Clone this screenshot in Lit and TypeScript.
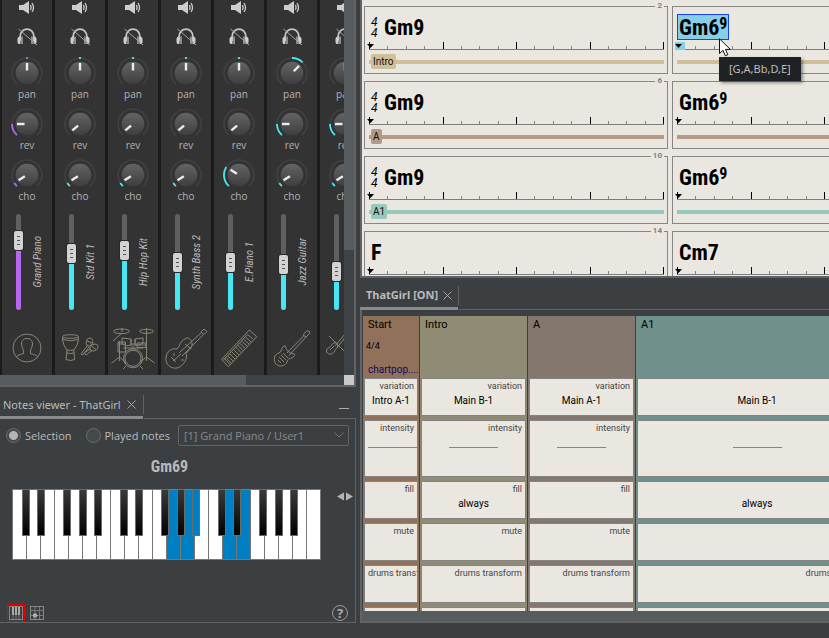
import { LitElement, html, css, svg, nothing, type TemplateResult } from "lit";
import { customElement, property } from "lit/decorators.js";
import { classMap } from "lit/directives/class-map.js";
import { styleMap } from "lit/directives/style-map.js";

const CYAN = "#48e6f4";
const VIOLET = "#b767ee";

interface Channel {
  name: string;
  color: string;
  pan: number;
  rev: number;
  cho: number;
  volume: number;
  icon: TemplateResult;
}

const person = svg`<circle cx="25" cy="22" r="14"/>
  <path d="M14.5 31C15.5 28.5 19 28.5 21.5 27.500C22.500 24 19.500 22 19.500 18C19.500 14 22 12.500 25 12.500S30.500 14 30.500 18C30.500 22 27.500 24 28.500 27.500C31 28.500 34.500 28.500 35.500 31"/>`;
const percussion = svg`<ellipse cx="15.500" cy="10.500" rx="8" ry="1.800"/>
  <path d="M7.500 11C7.500 17 9 20 12 24L11 33.500Q15.500 35.500 19.700 33.500L18.700 24C22 20 23.500 17 23.500 11M8 13.500Q15.500 16 23 13.500M12 24Q15.500 25 18.700 24M11.500 27Q15.500 28 19.300 27"/>
  <ellipse cx="34.500" cy="16" rx="3.200" ry="4" transform="rotate(25 34.500 16)"/>
  <ellipse cx="39" cy="21.500" rx="4.200" ry="3.200" transform="rotate(-25 39 21.500)"/>
  <path d="M32.500 19.500L26 28L28 29L34.500 20.500M35.500 23L29 27L31 29L37 24.500M32 15L37 17M36.500 20L41 23.500"/>`;
const drums = svg`<ellipse cx="13.500" cy="5.300" rx="8" ry="2.300"/><ellipse cx="38.500" cy="5.300" rx="7" ry="2"/>
  <circle cx="25" cy="32.300" r="9.500"/><circle cx="25" cy="32.300" r="8"/>
  <path d="M14 2V6M14 7L5 15M11.500 15V35M38.500 2V35M11.500 31L3.500 37M11.500 31L18 37M38.500 31L31 37M38.500 31L46.500 37M18 40L15 43M32 40L35 43M25 17V23M23 13V20M27 13V20"/>
  <path d="M10 16H17.500V26H10ZM10 18H17.500M29 17H38V21.500H29ZM29 19H38M14 12L23 13V19Q18 21 14 18ZM27 13L35 12V17Q31 20 27 19ZM15 22H35"/>`;
const bass = svg`<path d="M40 6L43 3L46 5.500L43 8.500ZM40.500 6.500L18 27M42.500 8.500L21 30"/>
  <path d="M24 13C27 10 31 14 31 18C31 22 28 25 25 27C27 32 23 40 16 42C9 43 4 38 5 31C6 25 11 22 16 23C19 20 19 15 24 13Z"/>
  <path d="M12 35L20 28M10 31L15 36M13 27V30M20 34H23M24 18L29 22"/>`;
const keyboard = svg`<path d="M35.300 4L42.700 10.700L14.300 40.700L7.700 33.300ZM33.500 8.500L39 13M9.500 31.500L16 38.500"/>
  <path d="M31.500 11L37 16M29.500 13L35 18M27.500 15L33 20M25.500 17L31 22.500M23.500 19L29 24.500M21.500 21L27 26.500M19.500 23.500L25 29M17.500 25.500L23 31M15.500 27.500L21 33M13.500 29.500L19 35M11.500 31L17 37"/>
  <path d="M33.500 8.500L9.500 34"/>`;
const guitar = svg`<path d="M36 9L39.500 5Q42.500 4 43 7L39 11ZM37 9.500L20 27M39 11L22 29.500"/>
  <path d="M17 20C20 19 18 24 21 25L24 27.500C27 28 28 27 27.500 29.500C26.500 33 21 32 20.500 34C20 39 14 42 9.500 38.500C5.500 35 7 28 12 27C15 26.500 14 21 17 20Z"/>
  <path d="M14 29L19 34M12 31L17 36M16 27L21 32M11 34L14 37"/>`;
const strings = svg`<path d="M25 8L15 20M27 9L17 22M9 10L27 28"/>
  <path d="M14 17C17 16 19 19 17 22C15 23 15 27 11 28C7 29 5 24 8 22C12 21 11 18 14 17ZM10 24L14 20"/>`;

const CHANNELS: Channel[] = [
  { name: "Grand Piano", color: VIOLET, pan: 0, rev: -90, cho: -122, volume: 60, icon: person },
  { name: "Std Kit 1", color: CYAN, pan: 0, rev: -130, cho: -122, volume: 47, icon: percussion },
  { name: "Hip Hop Kit", color: CYAN, pan: 0, rev: -130, cho: -122, volume: 50, icon: drums },
  { name: "Synth Bass 2", color: CYAN, pan: 0, rev: -130, cho: -122, volume: 38, icon: bass },
  { name: "E.Piano 1", color: CYAN, pan: 0, rev: -130, cho: -58, volume: 38, icon: keyboard },
  { name: "Jazz Guitar", color: CYAN, pan: 45, rev: -90, cho: -122, volume: 36, icon: guitar },
  { name: "Strings", color: CYAN, pan: 0, rev: -90, cho: -122, volume: 29, icon: strings },
];

const reset = css`
  *, *::before, *::after { box-sizing: border-box; }
  svg { display: block; }
  button { appearance: none; border: 0; padding: 0; margin: 0; background: none; color: inherit; font: inherit; }
`;

function polar(angle: number, r: number): string {
  const a = (angle * Math.PI) / 180;
  return `${(16 + r * Math.sin(a)).toFixed(2)} ${(16 - r * Math.cos(a)).toFixed(2)}`;
}

function arc(from: number, to: number, r: number): string {
  return `M${polar(from, r)}A${r} ${r} 0 ${to - from > 180 ? 1 : 0} 1 ${polar(to, r)}`;
}

@customElement("rotary-knob")
export class RotaryKnob extends LitElement {
  @property() label = "";
  @property() color = CYAN;
  @property({ type: Number }) angle = 0;

  static styles = [reset, css`
    :host { display: block; width: 32px; }
    .knob { display: block; position: relative; text-align: center; }
    .dial { width: 32px; height: 30px; }
    .input { position: absolute; inset: 0; width: 100%; height: 30px; margin: 0; opacity: 0; }
    .text { display: block; font: 10px/15px "Open Sans", sans-serif; color: #b4b4b4; }
  `];

  render() {
    const from = this.label === "pan" ? Math.min(0, this.angle) : -138;
    const lit = this.label === "pan" && this.angle === 0
      ? arc(-4, 4, 15)
      : this.angle > -130 ? arc(from, this.angle, 15) : "";
    return html`<label class="knob">
      <svg class="dial" viewBox="0 0 32 30" fill="none">
        <defs><linearGradient id="g" x1="0" y1="0" x2="0" y2="1">
          <stop offset="0" stop-color="#646464"/><stop offset="1" stop-color="#3e3e3e"/>
        </linearGradient></defs>
        <path d=${arc(-138, 138, 15)} stroke="#414141" stroke-width="1.6"/>
        ${lit ? svg`<path d=${lit} stroke=${this.color} stroke-width="1.8"/>` : nothing}
        <circle cx="16" cy="16" r="11.300" fill="url(#g)"/>
        <path d=${`M${polar(this.angle, 2.5)}L${polar(this.angle, 10)}`} stroke="#ececec" stroke-width="2.4"/>
      </svg>
      <input class="input" type="range" min="-138" max="138" .value=${String(this.angle)}>
      <span class="text">${this.label}</span>
    </label>`;
  }
}

@customElement("mixer-panel")
export class MixerPanel extends LitElement {
  static styles = [reset, css`
    :host { display: grid; grid-template: auto 10px / minmax(0, 1fr) 10px; border: solid #636363; border-width: 0 2px 2px 0; }
    .strips { display: flex; gap: 3px; padding-left: 2px; background: #1b1b1b; overflow: hidden; }
    .strip { flex: 0 0 50px; height: 375px; background: #333; display: flex; flex-direction: column; align-items: center; }
    .speaker { height: 15px; margin-bottom: 12px; }
    .phones { height: 20px; margin-bottom: 10px; }
    .knobs { display: flex; flex-direction: column; gap: 6px; }
    .level { display: grid; grid-template-columns: 9px 14px; column-gap: 8px; align-items: center; height: 96px; margin: 10px 0 16px; padding-left: 5px; }
    .fader { appearance: none; writing-mode: vertical-lr; direction: rtl; width: 9px; height: 96px; margin: 0; background: none; display: block; }
    .fader::-webkit-slider-runnable-track { width: 5px; height: 96px; border-radius: 3px; background: linear-gradient(to top, var(--tone) var(--fill), #2c2c2c var(--fill), #2c2c2c calc(var(--fill) + 1px), #606060 calc(var(--fill) + 1px)); }
    .fader::-webkit-slider-thumb { appearance: none; width: 9px; height: 19px; margin-left: -2px; border-radius: 2px; background:
      linear-gradient(#555, #555) 3px 5px / 3px 1px no-repeat,
      linear-gradient(#555, #555) 3px 9px / 3px 1px no-repeat,
      linear-gradient(#555, #555) 3px 13px / 3px 1px no-repeat, #d3d3d3; box-shadow: 0 0 0 1px #292929; }
    .name { writing-mode: vertical-rl; transform: rotate(180deg); justify-self: center; white-space: nowrap; font: italic 11px/14px "Roboto Condensed", "Liberation Sans Narrow", sans-serif; color: #b9b9b9; }
    .instrument { width: 50px; height: 44px; fill: none; stroke: #8a8676; stroke-width: 1; }
    .vbar { background: #3f4244; }
    .vthumb { height: 250px; background: #565b5e; }
    .hbar { background: #3f4244; }
    .hthumb { width: 71.5%; height: 10px; background: #565b5e; }
    .corner { background: #c9c9c9; }
  `];

  render() {
    return html`
      <div class="strips">${CHANNELS.map((c) => html`
        <section class="strip">
          <button class="speaker" aria-label="Mute">
            <svg width="16" height="15" viewBox="0 0 16 15" fill="none">
              <path d="M0 5H4L10 1V14L4 10H0Z" fill="#cdcdcd"/>
              <path d="M11.500 5Q12.500 7.500 11.500 10M13 3Q16 7.500 13 12" stroke="#cdcdcd" stroke-width="1.300"/>
            </svg>
          </button>
          <button class="phones" aria-label="Solo">
            <svg width="22" height="20" viewBox="0 0 22 20" fill="none">
              <path d="M4 14V10C4 -0.500 18 -0.500 18 10V14" stroke="#c4c4c4" stroke-width="1.800"/>
              <path d="M1.500 12Q1.500 9.500 4.500 9.500V17H3Q1.500 17 1.500 15ZM20.500 12Q20.500 9.500 17.500 9.500V17H19Q20.500 17 20.500 15Z" fill="#d0d0d0"/>
              <path d="M5 9.500H7V17H5ZM15 9.500H17V17H15Z" fill="#8a8a8a"/>
              <path d="M2.500 2L21 18" stroke="#a8a8a8" stroke-width="1"/>
            </svg>
          </button>
          <div class="knobs">
            <rotary-knob label="pan" color=${c.color} angle=${c.pan}></rotary-knob>
            <rotary-knob label="rev" color=${c.color} angle=${c.rev}></rotary-knob>
            <rotary-knob label="cho" color=${c.color} angle=${c.cho}></rotary-knob>
          </div>
          <div class="level">
            <input class="fader" type="range" min="0" max="77" aria-label="${c.name} volume" .value=${String(c.volume)}
              style=${styleMap({ "--tone": c.color, "--fill": `${c.volume - 1}px` })}>
            <span class="name">${c.name === "Strings" ? nothing : c.name}</span>
          </div>
          <svg class="instrument" viewBox="0 0 50 44">${c.icon}</svg>
        </section>`)}
      </div>
      <div class="vbar"><div class="vthumb"></div></div>
      <div class="hbar"><div class="hthumb"></div></div>
      <div class="corner"></div>`;
  }
}

const tabStyles = css`
  .tabs { display: flex; align-items: flex-end; }
  .tab { display: flex; align-items: center; gap: 6px; border-bottom: 3px solid #8a8a8a; white-space: nowrap; }
  .close { width: 9px; height: 9px; }
  .divider { width: 1px; background: #636363; align-self: stretch; }
  .rest { flex: 1; align-self: stretch; border-bottom: 1px solid #636363; }
`;

const cross = html`<svg width="9" height="9" viewBox="0 0 9 9"><path d="M.5 .5L8.500 8.500M8.500 .5L.5 8.500" stroke="#a5a5a5"/></svg>`;

const WHITE_ON = new Set([11, 12, 15, 16]);
const BLACK_OFFSETS = [10, 25, 51, 67, 82];

@customElement("notes-viewer")
export class NotesViewer extends LitElement {
  static styles = [reset, tabStyles, css`
    :host { display: flex; flex-direction: column; min-height: 0; color: #bbb; font: 11px/16px "Open Sans", sans-serif; }
    .tabs { height: 32px; }
    .tab { height: 32px; padding: 6px 7px 0 3px; font: 11px/16px "Noto Sans", sans-serif; }
    .divider { margin: 8px 0 5px; }
    .rest { display: flex; justify-content: flex-end; padding: 21px 7px 0 0; }
    .min { width: 10px; height: 1px; background: #aaa; }
    .body { flex: 1; display: flex; flex-direction: column; border: solid #636363; border-width: 0 1px 1px 0; }
    .options { display: flex; align-items: center; padding: 6px 6px 0; }
    .choice { display: flex; align-items: center; gap: 4px; white-space: nowrap; margin-right: 14px; }
    .choice.last { margin-right: 8px; }
    .radio { appearance: none; margin: 0; width: 15px; height: 15px; border: 1px solid #6c6c6c; border-radius: 50%; background: #43494a; }
    .radio:checked { background: radial-gradient(circle, #b4b4b4 4px, #43494a 5px); }
    .pick { position: relative; flex: 1; min-width: 0; }
    .select { appearance: none; width: 100%; height: 21px; padding: 0 20px 0 5px; border: 1px solid #646464; border-radius: 2px; background: #3c3f41; color: #8a8a8a; font: 11px/16px "Open Sans", sans-serif; opacity: 1; }
    .chevron { position: absolute; right: 5px; top: 7px; pointer-events: none; }
    .chord { margin: 9px 16px 0 0; text-align: center; font: bold 16px/24px "Roboto Condensed", "Liberation Sans Narrow", sans-serif; color: #b9b9b9; }
    .row { display: flex; justify-content: space-between; align-items: flex-start; margin: 10px 2px 0 12px; }
    .arrows { display: flex; gap: 2px; padding-top: 3px; }
    .tools { display: flex; align-items: center; margin: auto 7px 0; height: 18px; }
    .tool { width: 18px; height: 18px; border: 1px solid #e00; display: grid; place-items: center; }
    .tool.plain { border-color: transparent; margin-left: 3px; }
    .help { margin-left: auto; width: 16px; height: 16px; border: 1px solid #999; border-radius: 50%; color: #aaa; font: bold 13px/14px "Open Sans", sans-serif; }
  `];

  render() {
    return html`
      <div class="tabs">
        <div class="tab"><span>Notes viewer - ThatGirl</span><button class="close" aria-label="Close">${cross}</button></div>
        <div class="divider"></div>
        <div class="rest"><button class="min" aria-label="Minimize"></button></div>
      </div>
      <div class="body">
        <div class="options">
          <label class="choice"><input class="radio" type="radio" name="source" checked>Selection</label>
          <label class="choice last"><input class="radio" type="radio" name="source">Played notes</label>
          <div class="pick">
            <select class="select" aria-label="Channel" disabled><option>[1] Grand Piano / User1</option></select>
            <svg class="chevron" width="10" height="6" viewBox="0 0 10 6"><path d="M.5 .5L5 5L9.500 .5" fill="none" stroke="#777"/></svg>
          </div>
        </div>
        <div class="chord">Gm69</div>
        <div class="row">
          <svg width="309" height="71" viewBox="0 0 309 71">
            <defs><linearGradient id="ebony" x1="0" y1="0" x2="0" y2="1">
              <stop offset="0" stop-color="#3a3a3a"/><stop offset="1" stop-color="#000"/>
            </linearGradient></defs>
            ${Array.from({ length: 22 }, (_, i) => svg`<rect x=${i * 14 + 0.5} y="0.5" width="14" height="70"
              fill=${WHITE_ON.has(i) ? "#007fc2" : "#fff"} stroke="#777"/>`)}
            ${[0, 1, 2].flatMap((o) => BLACK_OFFSETS.map((x, i) => svg`<rect x=${o * 98 + x + 0.5} y="0.5" width="7" height="46"
              fill=${o === 1 && i === 4 ? "#007fc2" : "url(#ebony)"} stroke="#6c6c6c"/>`))}
          </svg>
          <div class="arrows">
            <button aria-label="Lower"><svg width="7" height="9" viewBox="0 0 7 9"><path d="M7 .5V8.500L0 4.500Z" fill="#b4b4b4"/></svg></button>
            <button aria-label="Higher"><svg width="7" height="9" viewBox="0 0 7 9"><path d="M0 .5V8.500L7 4.500Z" fill="#b4b4b4"/></svg></button>
          </div>
        </div>
        <div class="tools">
          <button class="tool" aria-label="Keyboard view"><svg width="14" height="14" viewBox="0 0 14 14">
            <rect x=".5" y=".5" width="13" height="13" fill="#3c3f41" stroke="#888"/>
            <path d="M4 9V13M7 9V13M10 9V13" stroke="#777"/><path d="M3 1H5V9H3ZM6 1H8V9H6ZM9 1H11V9H9Z" fill="#aaa"/></svg></button>
          <button class="tool plain" aria-label="Fretboard view"><svg width="14" height="14" viewBox="0 0 14 14">
            <rect x=".5" y=".5" width="13" height="13" fill="none" stroke="#888"/>
            <path d="M5 1V13M9.500 1V13M1 4.500H13M1 9.500H13" stroke="#777"/><circle cx="5" cy="9.500" r="2.200" fill="#b0b0b0"/></svg></button>
          <button class="help">?</button>
        </div>
      </div>`;
  }
}

interface Bar { chord: string; ext?: string; meter?: boolean; section?: string; tone?: string; num?: string; selected?: boolean }

const BARS: Bar[] = [
  { chord: "Gm9", meter: true, section: "Intro", tone: "#cfc099", num: "2" },
  { chord: "Gm6", ext: "9", tone: "#cfc099", selected: true },
  { chord: "Gm9", meter: true, section: "A", tone: "#b29a86", num: "6" },
  { chord: "Gm6", ext: "9", tone: "#b29a86" },
  { chord: "Gm9", meter: true, section: "A1", tone: "#97c9c1", num: "10" },
  { chord: "Gm6", ext: "9", tone: "#97c9c1" },
  { chord: "F", tone: "#97c9c1", num: "14" },
  { chord: "Cm7", tone: "#97c9c1" },
];

@customElement("chord-chart")
export class ChordChart extends LitElement {
  static styles = [reset, css`
    :host { display: block; position: relative; overflow: hidden; min-height: 0; background: #eae7e0; border: solid #636363; border-width: 0 0 2px 2px; }
    .grid { display: grid; grid-template-columns: repeat(2, 304px); gap: 7px 4px; padding: 6px 0 0 2px; }
    .bar { position: relative; height: 68px; border: 1px solid #868686; padding: 7px 3px 0 4px; color: #000; }
    .num { position: absolute; top: -6px; right: 3px; padding: 0 2px; background: #eae7e0; color: #857e8a; font: bold 8px/10px "Roboto", sans-serif; }
    .line { display: flex; height: 26px; padding-left: 1px; }
    .meter { width: 13px; padding: 3px 0 0 1px; font: italic 12px/11px "Roboto", sans-serif; }
    .meter span { display: block; }
    .chord { height: 26px; padding: 1px 1px 0; font: bold 22px/26px "Roboto Condensed", "Liberation Sans Narrow", sans-serif; white-space: nowrap; display: flex; }
    .ext { font-size: 16px; line-height: 18px; }
    .chord.on { background: #86cfe6; outline: 1px solid #1444e4; outline-offset: -1px; margin-left: -1px; padding: 1px 2px 0; }
    .ruler { display: flex; align-items: flex-end; height: 8px; margin-top: 2px; border-bottom: 1px solid #7d7d7d; }
    .tick { flex: 1; height: 3px; border-left: 1px solid #868686; }
    .tick.beat { height: 7px; border-color: #000; }
    .tick.end { flex: 0 0 1px; }
    .marker { position: absolute; left: 2px; top: 35px; width: 10px; height: 8px; }
    .marker.on { background: #86cfe6; }
    .part { display: flex; align-items: center; height: 15px; margin-top: 4px; padding-left: 2px; background: linear-gradient(var(--tone), var(--tone)) center / 100% 4px no-repeat; }
    .tag { padding: 0 2px; border-radius: 2px; background: var(--tone); font: 10px/15px "Roboto", sans-serif; color: #111; }
    .hint { position: absolute; left: 357px; top: 57px; padding: 4px 10px; background: #1e2224; color: #bdbdbd; font: 11px/16px "Noto Sans", sans-serif; box-shadow: 2px 2px 3px #0006; }
    .cursor { position: absolute; left: 357px; top: 38px; }
  `];

  render() {
    return html`<div class="grid">${BARS.map((b) => html`
      <div class="bar">
        ${b.num ? html`<span class="num">${b.num}</span>` : nothing}
        <div class="line">
          ${b.meter ? html`<div class="meter"><span>4</span><span>4</span></div>` : nothing}
          <div class=${classMap({ chord: true, on: !!b.selected })}>${b.chord}${b.ext ? html`<span class="ext">${b.ext}</span>` : nothing}</div>
        </div>
        <div class="ruler">
          ${Array.from({ length: 16 }, (_, i) => html`<i class=${classMap({ tick: true, beat: i % 4 === 0 })}></i>`)}
          <i class="tick beat end"></i>
        </div>
        <svg class=${classMap({ marker: true, on: !!b.selected })} viewBox="0 0 10 8"><path d="M0 2H7L3.500 6Z"/></svg>
        <div class="part" style=${styleMap({ "--tone": b.tone })}>${b.section ? html`<span class="tag">${b.section}</span>` : nothing}</div>
      </div>`)}
    </div>
    <div class="hint" role="tooltip">[G,A,Bb,D,E]</div>
    <svg class="cursor" width="13" height="19" viewBox="0 0 13 19"><path d="M.5 .8V15.500L4 12.300L6.300 17.800L8.800 16.700L6.500 11.400H11.300Z" fill="#fff" stroke="#111"/></svg>`;
  }
}

interface Part { name: string; variation: string; fill: string; kind: string; meter?: string; style?: string }

const PARTS: Part[] = [
  { name: "Start", variation: "Intro A-1", fill: "", kind: "start", meter: "4/4", style: "chartpop...." },
  { name: "Intro", variation: "Main B-1", fill: "always", kind: "intro" },
  { name: "A", variation: "Main A-1", fill: "", kind: "a" },
  { name: "A1", variation: "Main B-1", fill: "always", kind: "a1" },
];

@customElement("song-structure")
export class SongStructure extends LitElement {
  static styles = [reset, tabStyles, css`
    :host { display: flex; flex-direction: column; min-height: 0; }
    .tabs { flex: none; height: 32px; }
    .tab { height: 32px; padding: 5px 6px 0 6px; gap: 5px; color: #bbb; font: bold 11px/16px "Noto Sans", sans-serif; }
    .divider { margin: 8px 0 5px; }
    .body { flex: 1; min-height: 0; display: flex; flex-direction: column; border: solid #636363; border-width: 0 0 2px 2px; }
    .parts { flex: 1; min-height: 0; display: grid; grid-template-columns: 56px 107px 107px 242px; column-gap: 1px; padding: 6px 0 0 1px; overflow: hidden; }
    .part { min-width: 0; padding: 0 1px; overflow: hidden; }
    .start { background: #91715a; }
    .intro { background: #908b74; }
    .a { background: #84776d; }
    .a1 { background: #70908c; }
    .head { height: 62px; padding: 2px 0 0 4px; font: 11px/14px "Roboto", sans-serif; color: #000; white-space: nowrap; overflow: hidden; }
    .meter { margin: 7px 0 0 -2px; font: 9px/14px "Roboto", sans-serif; }
    .style { margin-top: 10px; font-size: 10px; color: #120a64; }
    .cell { height: 38px; margin-bottom: 4px; padding: 1px 3px 0; border: 1px solid #838383; background: #eae7e0; font: 10px/12px "Roboto", sans-serif; overflow: hidden; }
    .cell.tall { height: 57px; }
    .label { text-align: right; white-space: nowrap; color: #444; font-size: 9px; }
    .value { text-align: center; white-space: nowrap; color: #000; margin-top: 3px; }
    .level { width: 49px; height: 1px; background: #868686; margin: 13px auto 0; }
    .scroll { flex: none; height: 10px; background: #565b5e; }
  `];

  cell(label: string, value = "") {
    return html`<div class=${classMap({ cell: true, tall: label === "intensity" })}>
      <div class="label">${label}</div>
      ${label === "intensity" ? html`<div class="level"></div>` : html`<div class="value">${value}</div>`}
    </div>`;
  }

  render() {
    return html`
      <div class="tabs">
        <div class="tab"><span>ThatGirl [ON]</span><button class="close" aria-label="Close">${cross}</button></div>
        <div class="divider"></div>
        <div class="rest"></div>
      </div>
      <div class="body">
        <div class="parts">${PARTS.map((p) => html`
          <section class="part ${p.kind}">
            <div class="head">${p.name}
              ${p.meter ? html`<div class="meter">${p.meter}</div><div class="style">${p.style}</div>` : nothing}
            </div>
            ${this.cell("variation", p.variation)}
            ${this.cell("intensity")}
            ${this.cell("fill", p.fill)}
            ${this.cell("mute")}
            ${this.cell("drums transform")}
            ${this.cell("")}
          </section>`)}
        </div>
        <div class="scroll"></div>
      </div>`;
  }
}

@customElement("app-root")
export class AppRoot extends LitElement {
  static styles = [reset, css`
    :host { display: block; }
    .app { display: grid; grid-template: minmax(0, 1fr) / minmax(0, 356fr) minmax(0, 469fr); column-gap: 4px; height: 100vh; padding-bottom: 15px; background: #3c3f41; overflow: hidden; }
    .side, .main { display: flex; flex-direction: column; min-height: 0; }
    .notes { flex: 1; }
    .chart { flex: 276 1 0; }
    .song { flex: 345 1 0; }
  `];

  render() {
    return html`<div class="app">
      <div class="side"><mixer-panel></mixer-panel><notes-viewer class="notes"></notes-viewer></div>
      <div class="main"><chord-chart class="chart"></chord-chart><song-structure class="song"></song-structure></div>
    </div>`;
  }
}
